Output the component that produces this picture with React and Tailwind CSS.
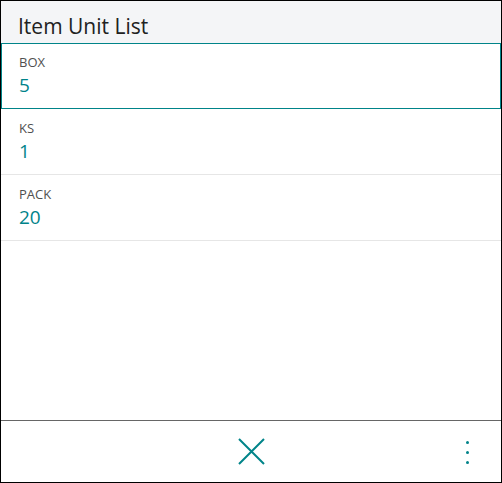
import React from 'react';

const units = [
  { code: 'BOX', qty: '5' },
  { code: 'KS', qty: '1' },
  { code: 'PACK', qty: '20' },
];

function UnitRow({ code, qty, selected }) {
  return (
    <div
      className={
        selected
          ? 'h-[66px] border border-[#008489] pl-[17px] pt-[9px]'
          : 'h-[66px] border-b border-[#e6e6e6] pl-[18px] pt-[10px]'
      }
    >
      <div className="text-[13px] leading-[18px] text-[#505050]">{code}</div>
      <div className="mt-[2px] text-[19px] leading-[24px] text-[#00838a]">{qty}</div>
    </div>
  );
}

export default function App() {
  return (
    <div
      className="flex h-[483px] w-[502px] flex-col border border-black bg-white"
      style={{ fontFamily: '"Open Sans", "Noto Sans", sans-serif' }}
    >
      {/* Header */}
      <div className="h-[42px] bg-[#f4f5f7] px-[17px] pt-[12px]">
        <h1 className="text-[21px] leading-[26px] text-[#212121]">Item Unit List</h1>
      </div>

      {/* List */}
      <div className="flex-1">
        {units.map((u, i) => (
          <UnitRow key={u.code} {...u} selected={i === 0} />
        ))}
      </div>

      {/* Footer */}
      <div className="relative flex h-[62px] items-center justify-center border-t border-[#666]">
        <button aria-label="Close" className="text-[#008489]">
          <svg width="27" height="27" viewBox="0 0 27 27" fill="none" stroke="currentColor" strokeWidth="2">
            <path d="M1 1L26 26M26 1L1 26" />
          </svg>
        </button>
        <button aria-label="More" className="absolute right-[32px] top-[20px] flex flex-col gap-[7px] text-[#00838a]">
          <span className="block h-[3px] w-[3px] rounded-full bg-current" />
          <span className="block h-[3px] w-[3px] rounded-full bg-current" />
          <span className="block h-[3px] w-[3px] rounded-full bg-current" />
        </button>
      </div>
    </div>
  );
}
